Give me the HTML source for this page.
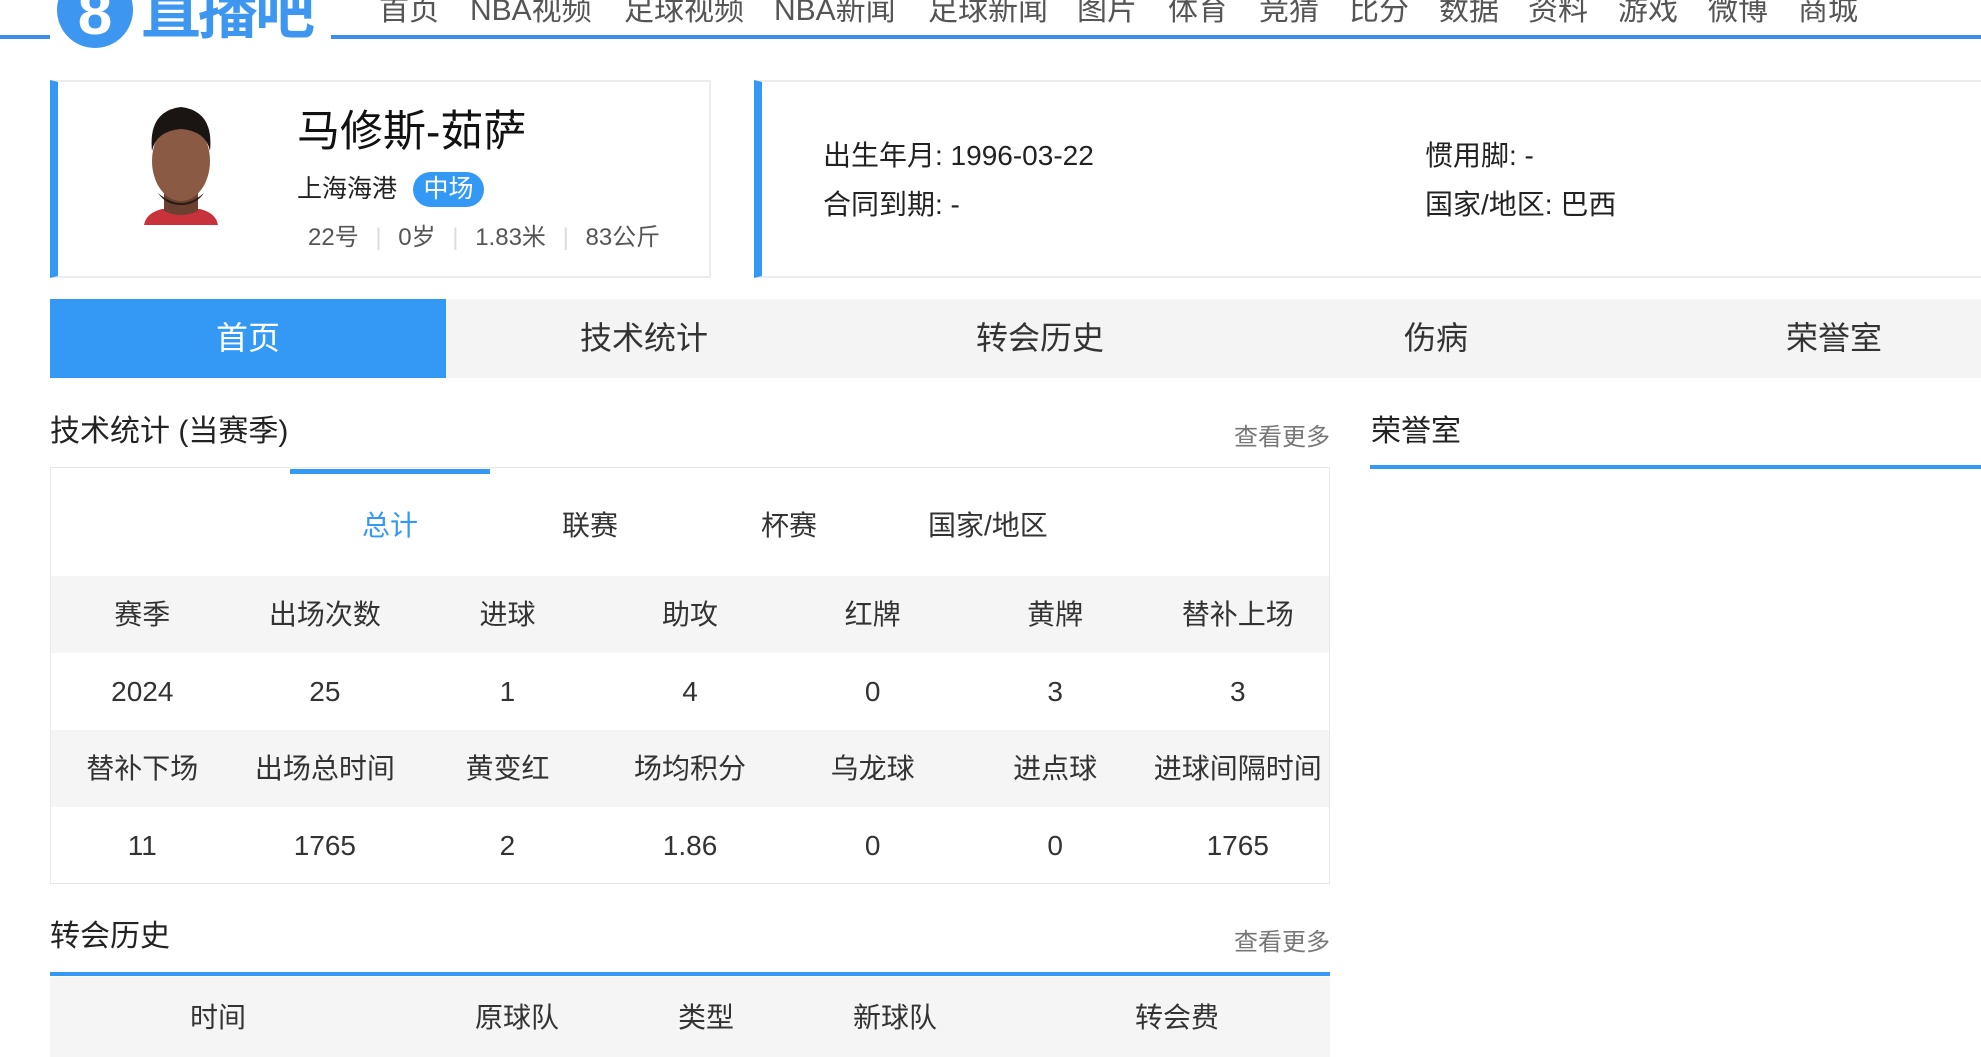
<!DOCTYPE html>
<html><head><meta charset="utf-8"><style>
*{margin:0;padding:0;box-sizing:border-box}
body{width:1981px;height:1049px;overflow:hidden;background:#fff;font-family:"Liberation Sans","Noto Sans CJK SC",sans-serif;color:#222;position:relative}
.a{position:absolute;white-space:nowrap}
.blue{color:#3399f5}
.nav span{position:absolute;top:-7px;font-size:30px;color:#555;line-height:36px}
.tab{position:absolute;top:299px;height:79px;width:396px;text-align:center;line-height:79px;font-size:32px;color:#333;background:#f4f4f4}
.row{position:absolute;left:51px;width:1278px;height:77px;display:flex}
.row div{flex:1;text-align:center;line-height:77px;font-size:28px;color:#333}
.g{background:#f5f5f5}
</style></head><body>
<div class="a" style="left:0;top:35px;width:50px;height:4px;background:#3d8ee8"></div>
<div class="a" style="left:331px;top:35px;width:1650px;height:4px;background:#3d8ee8"></div>
<svg class="a" style="left:55px;top:0" width="80" height="50" viewBox="0 0 80 50"><circle cx="40" cy="10" r="38" fill="#3d97f0"/><text x="40" y="34" text-anchor="middle" font-family="Liberation Sans" font-weight="bold" font-size="62" fill="#fff">8</text></svg>
<div class="a" style="left:141px;top:-22px;font-size:60px;font-weight:bold;color:#3d97f0;line-height:70px;letter-spacing:-3px">直播吧</div>
<div class="nav">
<span style="left:379px">首页</span><span style="left:470px">NBA视频</span><span style="left:624px">足球视频</span><span style="left:774px">NBA新闻</span><span style="left:928px">足球新闻</span><span style="left:1077px">图片</span><span style="left:1168px">体育</span><span style="left:1259px">竞猜</span><span style="left:1349px">比分</span><span style="left:1439px">数据</span><span style="left:1528px">资料</span><span style="left:1618px">游戏</span><span style="left:1708px">微博</span><span style="left:1798px">商城</span>
</div>
<div class="a" style="left:50px;top:80px;width:661px;height:198px;border:2px solid #ececec;border-left:8px solid #3399f5"></div>
<svg class="a" style="left:136px;top:101px" width="90" height="124" viewBox="0 0 90 124"><path d="M8 124 Q10 112 26 108 L64 108 Q80 112 82 124Z" fill="#c8323a"/><path d="M28 85 L28 110 Q45 118 62 110 L62 85Z" fill="#6b4030"/><ellipse cx="45" cy="60" rx="29" ry="40" fill="#8a5a44"/><path d="M16 50 Q12 10 45 6 Q78 10 74 50 Q70 30 45 28 Q20 30 16 50Z" fill="#1a1512"/><path d="M22 92 Q45 112 68 92 Q60 104 45 104 Q30 104 22 92Z" fill="#2a1c16"/></svg>
<div class="a" style="left:297px;top:106px;font-size:43px;line-height:52px;color:#111">马修斯-茹萨</div>
<div class="a" style="left:297px;top:173px;font-size:25px;line-height:32px;color:#222">上海海港</div>
<div class="a" style="left:413px;top:172px;width:71px;height:35px;border-radius:18px;background:#3399f5;color:#fff;font-size:25px;line-height:35px;text-align:center">中场</div>
<div class="a" style="left:308px;top:223px;font-size:24px;line-height:30px;color:#555">22号 <span style="color:#ddd;margin:0 10px">|</span> 0岁 <span style="color:#ddd;margin:0 10px">|</span> 1.83米 <span style="color:#ddd;margin:0 10px">|</span> 83公斤</div>
<div class="a" style="left:754px;top:80px;width:1240px;height:198px;border:2px solid #ececec;border-left:8px solid #3399f5"></div>
<div class="a" style="left:823px;top:138px;font-size:28px;line-height:36px;color:#222">出生年月: 1996-03-22</div>
<div class="a" style="left:823px;top:187px;font-size:28px;line-height:36px;color:#222">合同到期: -</div>
<div class="a" style="left:1425px;top:138px;font-size:28px;line-height:36px;color:#222">惯用脚: -</div>
<div class="a" style="left:1425px;top:187px;font-size:28px;line-height:36px;color:#222">国家/地区: 巴西</div>
<div class="tab" style="left:50px;background:#3399f5;color:#fff">首页</div>
<div class="tab" style="left:446px">技术统计</div>
<div class="tab" style="left:842px">转会历史</div>
<div class="tab" style="left:1238px">伤病</div>
<div class="tab" style="left:1634px;width:400px">荣誉室</div>
<div class="a" style="left:50px;top:413px;font-size:30px;line-height:38px;color:#222">技术统计 (当赛季)</div>
<div class="a" style="left:1234px;top:423px;font-size:24px;line-height:30px;color:#777">查看更多</div>
<div class="a" style="left:1371px;top:413px;font-size:30px;line-height:38px;color:#222">荣誉室</div>
<div class="a" style="left:1370px;top:465px;width:611px;height:4px;background:#3399f5"></div>
<div class="a" style="left:50px;top:467px;width:1280px;height:417px;border:1px solid #e8e8e8"></div>
<div class="a" style="left:290px;top:469px;width:200px;height:5px;background:#3399f5"></div>
<div class="a blue" style="left:362px;top:508px;font-size:28px;line-height:36px">总计</div>
<div class="a" style="left:562px;top:508px;font-size:28px;line-height:36px;color:#333">联赛</div>
<div class="a" style="left:761px;top:508px;font-size:28px;line-height:36px;color:#333">杯赛</div>
<div class="a" style="left:928px;top:508px;font-size:28px;line-height:36px;color:#333">国家/地区</div>
<div class="row g" style="top:576px"><div>赛季</div><div>出场次数</div><div>进球</div><div>助攻</div><div>红牌</div><div>黄牌</div><div>替补上场</div></div>
<div class="row" style="top:653px"><div>2024</div><div>25</div><div>1</div><div>4</div><div>0</div><div>3</div><div>3</div></div>
<div class="row g" style="top:730px"><div>替补下场</div><div>出场总时间</div><div>黄变红</div><div>场均积分</div><div>乌龙球</div><div>进点球</div><div>进球间隔时间</div></div>
<div class="row" style="top:807px"><div>11</div><div>1765</div><div>2</div><div>1.86</div><div>0</div><div>0</div><div>1765</div></div>
<div class="a" style="left:50px;top:918px;font-size:30px;line-height:38px;color:#222">转会历史</div>
<div class="a" style="left:1234px;top:928px;font-size:24px;line-height:30px;color:#777">查看更多</div>
<div class="a" style="left:50px;top:972px;width:1280px;height:4px;background:#3399f5"></div>
<div class="a g" style="left:50px;top:977px;width:1280px;height:80px"></div>
<div class="a" style="left:190px;top:1000px;font-size:28px;line-height:36px;color:#333">时间</div>
<div class="a" style="left:475px;top:1000px;font-size:28px;line-height:36px;color:#333">原球队</div>
<div class="a" style="left:678px;top:1000px;font-size:28px;line-height:36px;color:#333">类型</div>
<div class="a" style="left:853px;top:1000px;font-size:28px;line-height:36px;color:#333">新球队</div>
<div class="a" style="left:1135px;top:1000px;font-size:28px;line-height:36px;color:#333">转会费</div>
</body></html>
